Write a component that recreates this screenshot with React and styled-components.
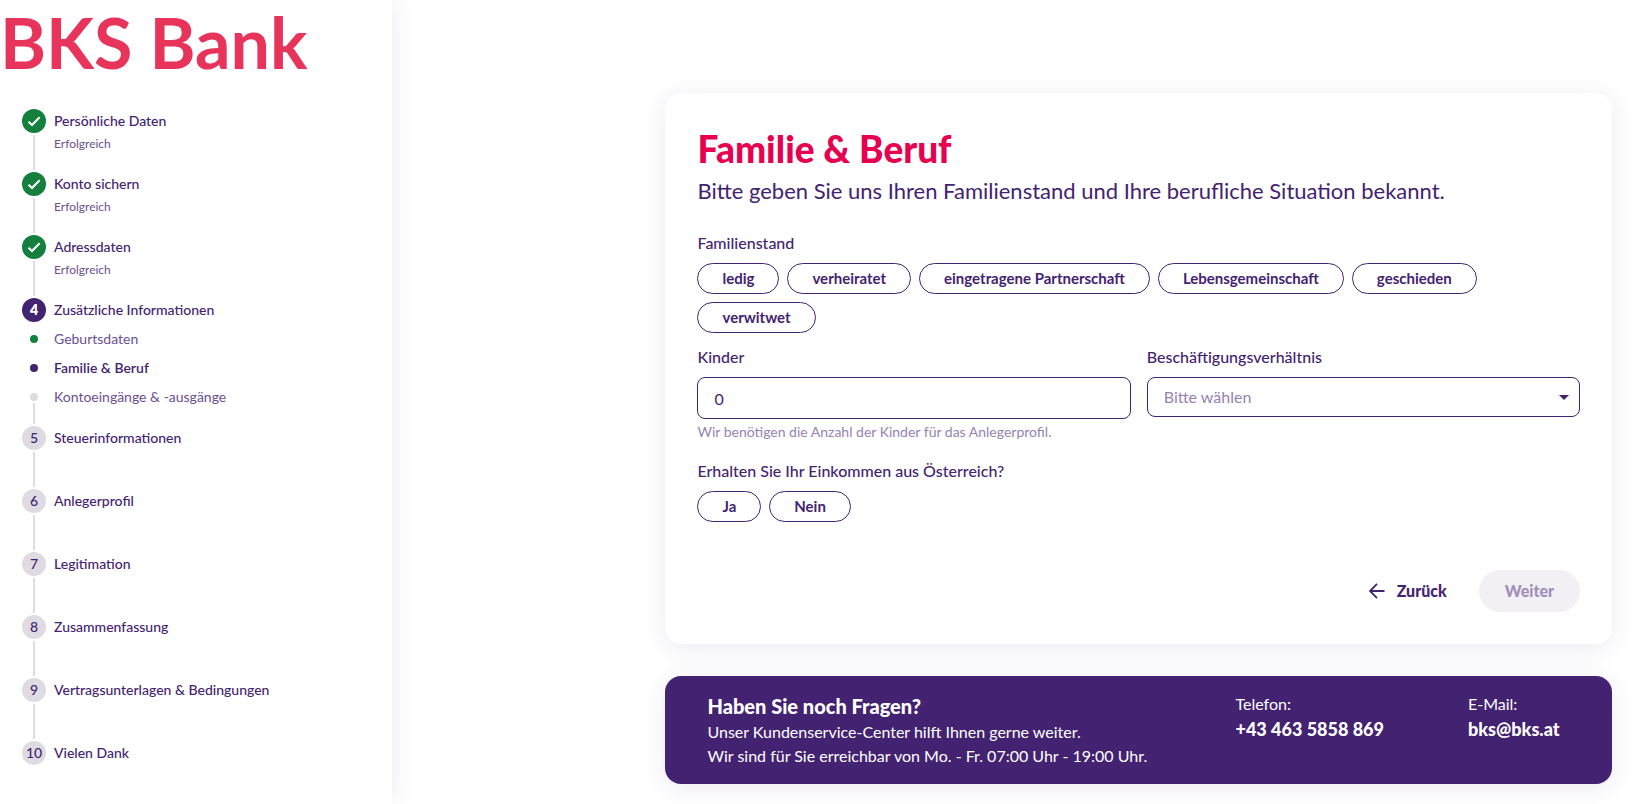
import React, { useState } from "react";
import styled, { createGlobalStyle, css } from "styled-components";

const doneSteps = ["Persönliche Daten", "Konto sichern", "Adressdaten"];

const subSteps = [
  { label: "Geburtsdaten", color: "#15803d" },
  { label: "Familie & Beruf", color: "#432371", active: true },
  { label: "Kontoeingänge & -ausgänge", color: "#dedbe3" },
];

const openSteps = [
  "Steuerinformationen",
  "Anlegerprofil",
  "Legitimation",
  "Zusammenfassung",
  "Vertragsunterlagen & Bedingungen",
  "Vielen Dank",
];

const maritalOptions = [
  "ledig",
  "verheiratet",
  "eingetragene Partnerschaft",
  "Lebensgemeinschaft",
  "geschieden",
  "verwitwet",
];

const CheckIcon = () => (
  <svg width="14" height="14" viewBox="0 0 14 14" fill="none">
    <path d="M1.5 7.8 L5 11 L12.6 3.2" stroke="#fff" strokeWidth="2" />
  </svg>
);

const ArrowLeftIcon = () => (
  <svg width="16" height="16" viewBox="0 0 16 16" fill="none">
    <path
      d="M15.5 8 H1 M8 0.8 L1 8 L8 15.2"
      stroke="currentColor"
      strokeWidth="1.8"
    />
  </svg>
);

const ChipGroup = ({ legend, options }) => {
  const [selected, setSelected] = useState(null);

  return (
    <Fieldset>
      <Legend>{legend}</Legend>
      <Chips>
        {options.map((option) => (
          <Chip
            key={option}
            type="button"
            aria-pressed={selected === option}
            $selected={selected === option}
            onClick={() => setSelected(option)}
          >
            {option}
          </Chip>
        ))}
      </Chips>
    </Fieldset>
  );
};

const Stepper = () => (
  <Steps>
    {doneSteps.map((label) => (
      <Step key={label}>
        <Rail>
          <Circle $state="done">
            <CheckIcon />
          </Circle>
          <Line />
        </Rail>
        <StepText>
          <StepLabel>{label}</StepLabel>
          <StepStatus>Erfolgreich</StepStatus>
        </StepText>
      </Step>
    ))}

    <ActiveStep>
      <StepHead>
        <Circle $state="active">4</Circle>
        <StepLabel>Zusätzliche Informationen</StepLabel>
      </StepHead>
      <SubSteps>
        {subSteps.map(({ label, color, active }) => (
          <SubStep key={label} $active={active}>
            <Dot $color={color} />
            <SubLink href="#">{label}</SubLink>
          </SubStep>
        ))}
      </SubSteps>
      <SubLine />
    </ActiveStep>

    {openSteps.map((label, index) => (
      <Step key={label}>
        <Rail>
          <Circle>{index + 5}</Circle>
          {index < openSteps.length - 1 && <Line />}
        </Rail>
        <StepLabel>{label}</StepLabel>
      </Step>
    ))}
  </Steps>
);

const App = () => {
  const [children, setChildren] = useState("0");

  return (
    <Page>
      <GlobalStyle />
      <Sidebar>
        <Logo>BKS Bank</Logo>
        <Stepper />
      </Sidebar>

      <Main>
        <Card onSubmit={(e) => e.preventDefault()}>
          <Title>Familie &amp; Beruf</Title>
          <Subtitle>
            Bitte geben Sie uns Ihren Familienstand und Ihre berufliche
            Situation bekannt.
          </Subtitle>

          <ChipGroup legend="Familienstand" options={maritalOptions} />

          <FieldRow>
            <Field>
              <Label htmlFor="kinder">Kinder</Label>
              <Input
                id="kinder"
                type="text"
                inputMode="numeric"
                value={children}
                onChange={(e) => setChildren(e.target.value)}
              />
              <Hint>
                Wir benötigen die Anzahl der Kinder für das Anlegerprofil.
              </Hint>
            </Field>
            <Field>
              <Label htmlFor="beschaeftigung">Beschäftigungsverhältnis</Label>
              <SelectBox>
                <Select id="beschaeftigung" defaultValue="">
                  <option value="">Bitte wählen</option>
                </Select>
                <Caret viewBox="0 0 10 5">
                  <path d="M0 0 H10 L5 5 Z" fill="#432371" />
                </Caret>
              </SelectBox>
            </Field>
          </FieldRow>

          <ChipGroup
            legend="Erhalten Sie Ihr Einkommen aus Österreich?"
            options={["Ja", "Nein"]}
          />

          <Actions>
            <BackButton type="button">
              <ArrowLeftIcon />
              Zurück
            </BackButton>
            <NextButton type="submit" disabled>
              Weiter
            </NextButton>
          </Actions>
        </Card>

        <HelpPanel>
          <div>
            <HelpTitle>Haben Sie noch Fragen?</HelpTitle>
            <p>Unser Kundenservice-Center hilft Ihnen gerne weiter.</p>
            <p>
              Wir sind für Sie erreichbar von Mo. - Fr. 07:00 Uhr - 19:00 Uhr.
            </p>
          </div>
          <Contacts>
            <Contact>
              <span>Telefon:</span>
              <ContactLink href="tel:+434635858869">
                +43 463 5858 869
              </ContactLink>
            </Contact>
            <Contact>
              <span>E-Mail:</span>
              <ContactLink href="mailto:bks@bks.at">bks@bks.at</ContactLink>
            </Contact>
          </Contacts>
        </HelpPanel>
      </Main>
    </Page>
  );
};

const GlobalStyle = createGlobalStyle`
  *, *::before, *::after {
    box-sizing: border-box;
  }
  body {
    margin: 0;
    background: #fff;
    color: #432371;
    font-family: Lato, "Open Sans", sans-serif;
    font-size: 16px;
    line-height: 24px;
  }
  p, h1, h2, ol, ul, fieldset {
    margin: 0;
    padding: 0;
  }
  button, input, select {
    font: inherit;
    color: inherit;
  }
`;

const Page = styled.div`
  display: flex;
  min-height: 100vh;
`;

const Sidebar = styled.aside`
  flex: 0 0 24%;
  padding-bottom: 36px;
  box-shadow: 0 0 24px rgba(67, 35, 113, 0.1);
`;

const Logo = styled.div`
  padding-top: 2px;
  color: #e8345a;
  font-size: 70px;
  font-weight: 700;
  line-height: 80px;
  white-space: nowrap;
`;

const Steps = styled.ol`
  padding: 27px 22px 0;
  list-style: none;
`;

const Step = styled.li`
  display: flex;
  gap: 8px;
  min-height: 63px;

  &:last-child {
    min-height: 24px;
  }
`;

const Rail = styled.div`
  display: flex;
  flex-direction: column;
  align-items: center;
`;

const Circle = styled.span`
  display: flex;
  flex: none;
  align-items: center;
  justify-content: center;
  width: 24px;
  height: 24px;
  border-radius: 50%;
  background: #dedbe3;
  font-size: 14px;
  font-weight: 500;

  ${({ $state }) => $state === "done" && css`
    background: #15803d;
  `}
  ${({ $state }) => $state === "active" && css`
    background: #432371;
    color: #fff;
    font-weight: 800;
  `}
`;

const Line = styled.span`
  flex: 1;
  width: 2px;
  margin: 2px 0;
  background: #dedbe3;
`;

const StepText = styled.div`
  display: flex;
  flex-direction: column;
`;

const StepLabel = styled.span`
  font-size: 14px;
  font-weight: 500;
  line-height: 24px;
`;

const StepStatus = styled.span`
  color: #6b4f92;
  font-size: 12px;
  line-height: 22px;
`;

const ActiveStep = styled.li`
  padding-bottom: 2px;
`;

const StepHead = styled.div`
  display: flex;
  gap: 8px;
`;

const SubSteps = styled.ul`
  padding: 2px 0 0 8px;
  list-style: none;
`;

const SubStep = styled.li`
  display: flex;
  align-items: center;
  gap: 16px;
  padding: 3px 0;
  color: ${({ $active }) => ($active ? "#432371" : "#6b4f92")};
  font-size: 14px;
  font-weight: ${({ $active }) => ($active ? 600 : 400)};
  line-height: 23px;
`;

const SubLink = styled.a`
  color: inherit;
  text-decoration: none;
`;

const Dot = styled.span`
  width: 8px;
  height: 8px;
  border-radius: 50%;
  background: ${({ $color }) => $color};
`;

const SubLine = styled.div`
  width: 2px;
  height: 21px;
  margin: -8px 0 0 11px;
  background: #dedbe3;
`;

const Main = styled.main`
  display: flex;
  flex: 1;
  flex-direction: column;
  align-items: flex-end;
  gap: 32px;
  padding: 93px 20px 16px 0;
`;

const panel = css`
  width: 58vw;
  border-radius: 16px;
  box-shadow: 0 4px 24px rgba(67, 35, 113, 0.1);
`;

const Card = styled.form`
  ${panel}
  padding: 32px;
  background: #fff;
`;

const Title = styled.h1`
  color: #e6004f;
  font-size: 37px;
  font-weight: 900;
  line-height: 48px;
`;

const Subtitle = styled.p`
  margin-bottom: 22px;
  font-size: 22px;
  line-height: 36px;
`;

const Fieldset = styled.fieldset`
  border: 0;
`;

const Legend = styled.legend`
  padding: 0;
  font-weight: 500;
  line-height: 24px;
`;

const Label = styled.label`
  font-weight: 500;
  line-height: 24px;
`;

const Chips = styled.div`
  display: flex;
  flex-wrap: wrap;
  gap: 8px;
  padding-top: 8px;
`;

const Chip = styled.button`
  padding: 0 24px;
  border: 1px solid #432371;
  border-radius: 16px;
  background: ${({ $selected }) => ($selected ? "#432371" : "#fff")};
  color: ${({ $selected }) => ($selected ? "#fff" : "#432371")};
  font-size: 15px;
  font-weight: 700;
  line-height: 29px;
  cursor: pointer;
`;

const FieldRow = styled.div`
  display: grid;
  grid-template-columns: 1fr 1fr;
  gap: 16px;
  margin: 12px 0 14px;
`;

const Field = styled.div`
  display: flex;
  flex-direction: column;
`;

const Input = styled.input`
  height: 42px;
  margin-top: 8px;
  padding: 0 16px;
  border: 1px solid #432371;
  border-radius: 8px;
  background: #fff;
  outline: none;
`;

const SelectBox = styled.div`
  position: relative;
  margin-top: 8px;
`;

const Select = styled.select`
  width: 100%;
  height: 40px;
  padding: 0 32px 0 16px;
  border: 1px solid #432371;
  border-radius: 8px;
  background: #fff;
  color: #9683b3;
  appearance: none;
  outline: none;
`;

const Caret = styled.svg`
  position: absolute;
  top: 18px;
  right: 11px;
  width: 10px;
  height: 5px;
  pointer-events: none;
`;

const Hint = styled.p`
  color: #9683b3;
  font-size: 14px;
  line-height: 26px;
`;

const Actions = styled.div`
  display: flex;
  justify-content: flex-end;
  gap: 8px;
  margin-top: 48px;
`;

const BackButton = styled.button`
  display: flex;
  align-items: center;
  gap: 12px;
  height: 42px;
  padding: 0 24px;
  border: 0;
  background: none;
  font-weight: 900;
  cursor: pointer;
`;

const NextButton = styled.button`
  height: 42px;
  padding: 0 26px;
  border: 0;
  border-radius: 21px;
  background: #f2eff5;
  color: #a18fba;
  font-weight: 900;
`;

const HelpPanel = styled.section`
  ${panel}
  display: flex;
  justify-content: space-between;
  padding: 16px 42px;
  background: #432371;
  color: #fff;
`;

const HelpTitle = styled.h2`
  font-size: 20px;
  font-weight: 900;
  line-height: 28px;
`;

const Contacts = styled.div`
  display: flex;
  gap: 84px;
`;

const Contact = styled.div`
  display: flex;
  flex-direction: column;
  min-width: 102px;
`;

const ContactLink = styled.a`
  color: #fff;
  font-size: 18px;
  font-weight: 900;
  line-height: 26px;
  text-decoration: none;
`;

export default App;
